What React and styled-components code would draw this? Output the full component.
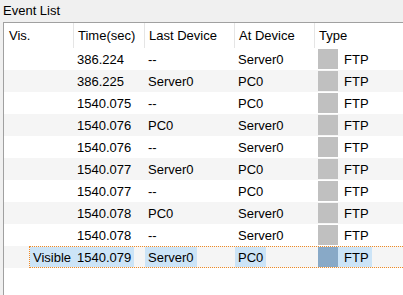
import React from "react";
import styled, { createGlobalStyle } from "styled-components";

const GlobalStyle = createGlobalStyle`
    html, body {
        margin: 0;
        padding: 0;
        background: #f0f0f0;
    }
    * {
        box-sizing: border-box;
    }
`;

const Window = styled.div`
    width: 403px;
    height: 295px;
    display: flex;
    flex-direction: column;
    background: #f0f0f0;
    font-family: "Liberation Sans", Arial, sans-serif;
    font-size: 13px;
    color: #000;
    overflow: hidden;
`;

const Title = styled.div`
    height: 22px;
    line-height: 22px;
    padding-left: 3px;
`;

const Panel = styled.div`
    flex: 1;
    margin-left: 3px;
    background: #fff;
    border-left: 1px solid #a0a0a0;
    border-top: 1px solid #a0a0a0;
    overflow: hidden;
`;

const Header = styled.div`
    display: grid;
    grid-template-columns: 70px 71px 90px 80px 1fr;
    height: 25px;
    background: #fff;
`;

const HeadCell = styled.div`
    display: flex;
    align-items: center;
    padding-left: ${(p) => (p.$first ? "5px" : "4px")};
    border-right: ${(p) => (p.$last ? "none" : "1px solid #e5e5e5")};
    white-space: nowrap;
`;

const Row = styled.div`
    display: flex;
    height: 22px;
    background: ${(p) => (p.$alt ? "#f5f5f5" : "#fff")};
`;

const Indent = styled.div`
    width: 25px;
    flex: none;
`;

const Item = styled.div`
    flex: 1;
    display: grid;
    grid-template-columns: 44px 71px 90px 80px 1fr;
    border: 1px dotted ${(p) => (p.$focus ? "#f08a24" : "transparent")};
    border-right: none;
`;

const Cell = styled.div`
    display: flex;
    align-items: stretch;
    white-space: nowrap;
`;

const Text = styled.span`
    display: flex;
    align-items: center;
    padding: 0 3px;
    background: ${(p) => (p.$selected ? "#cce4f7" : "transparent")};
    flex: ${(p) => (p.$fill ? "1" : "none")};
`;

const Swatch = styled.span`
    width: 20px;
    margin-left: 3px;
    background: ${(p) => (p.$selected ? "#88a9c7" : "#c0c0c0")};
`;

const TypeText = styled(Text)`
    padding: 0 3px 0 6px;
`;

const events = [
    ["", "386.224", "--", "Server0", "FTP"],
    ["", "386.225", "Server0", "PC0", "FTP"],
    ["", "1540.075", "--", "PC0", "FTP"],
    ["", "1540.076", "PC0", "Server0", "FTP"],
    ["", "1540.076", "--", "Server0", "FTP"],
    ["", "1540.077", "Server0", "PC0", "FTP"],
    ["", "1540.077", "--", "PC0", "FTP"],
    ["", "1540.078", "PC0", "Server0", "FTP"],
    ["", "1540.078", "--", "Server0", "FTP"],
    ["Visible", "1540.079", "Server0", "PC0", "FTP"],
];

const columns = ["Vis.", "Time(sec)", "Last Device", "At Device", "Type"];

const App = () => {
    const selectedIndex = events.length - 1;

    return (
        <Window>
            <GlobalStyle />
            <Title>Event List</Title>
            <Panel>
                <Header>
                    {columns.map((c, i) => (
                        <HeadCell key={c} $first={i === 0} $last={i === columns.length - 1}>
                            {c}
                        </HeadCell>
                    ))}
                </Header>
                {events.map((ev, i) => {
                    const sel = i === selectedIndex;
                    const [vis, time, last, at, type] = ev;
                    return (
                        <Row key={i} $alt={i % 2 === 1}>
                            <Indent />
                            <Item $focus={sel}>
                                <Cell>
                                    {vis && (
                                        <Text $selected={sel} $fill>
                                            {vis}
                                        </Text>
                                    )}
                                </Cell>
                                <Cell>
                                    <Text $selected={sel}>{time}</Text>
                                </Cell>
                                <Cell>
                                    <Text $selected={sel}>{last}</Text>
                                </Cell>
                                <Cell>
                                    <Text $selected={sel}>{at}</Text>
                                </Cell>
                                <Cell>
                                    <Swatch $selected={sel} />
                                    <TypeText $selected={sel}>{type}</TypeText>
                                </Cell>
                            </Item>
                        </Row>
                    );
                })}
            </Panel>
        </Window>
    );
};

export default App;
